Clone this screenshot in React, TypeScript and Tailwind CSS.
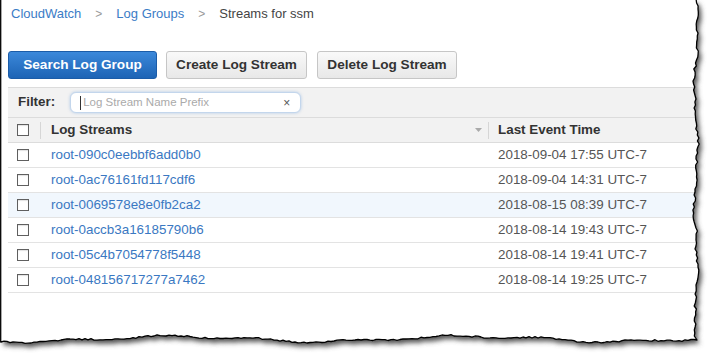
import React from "react";

const rows = [
  { name: "root-090c0eebbf6add0b0", time: "2018-09-04 17:55 UTC-7", hl: false },
  { name: "root-0ac76161fd117cdf6", time: "2018-09-04 14:31 UTC-7", hl: false },
  { name: "root-0069578e8e0fb2ca2", time: "2018-08-15 08:39 UTC-7", hl: true },
  { name: "root-0accb3a16185790b6", time: "2018-08-14 19:43 UTC-7", hl: false },
  { name: "root-05c4b7054778f5448", time: "2018-08-14 19:41 UTC-7", hl: false },
  { name: "root-048156717277a7462", time: "2018-08-14 19:25 UTC-7", hl: false },
];

function makeRand(seed: number) {
  let s = seed;
  return () => {
    s = (s * 1103515245 + 12345) % 2147483648;
    return s / 2147483648;
  };
}

function tornPaths() {
  const r = makeRand(42);
  const right: [number, number][] = [];
  for (let y = 0; y <= 338; y += 3) {
    const x = 696 + 1.6 * Math.sin(y / 19) + 0.8 * Math.sin(y / 7) + (r() - 0.5) * 2.4;
    right.push([x, y]);
  }
  const bottom: [number, number][] = [];
  for (let x = 697; x >= 0; x -= 3) {
    const y = 339 + 2.6 * Math.sin(x / 47 + 1) + 1.2 * Math.sin(x / 15) + (r() - 0.5) * 1.6;
    bottom.push([x, y]);
  }
  const pts = [...right, ...bottom, [0.7, 342] as [number, number], [0.7, 0] as [number, number]];
  const open = "M" + pts.map((p) => `${p[0].toFixed(1)},${p[1].toFixed(1)}`).join(" L");
  const closed = "M0,0 L" + pts.map((p) => `${p[0].toFixed(1)},${p[1].toFixed(1)}`).join(" L") + " Z";
  return { open, closed };
}

function TornFrame() {
  const { open, closed } = tornPaths();
  return (
    <svg className="absolute inset-0 pointer-events-none" width={710} height={353} viewBox="0 0 710 353">
      <defs>
        <filter id="blur" x="-10%" y="-10%" width="120%" height="120%">
          <feGaussianBlur stdDeviation="2.6" />
        </filter>
        <mask id="outside">
          <rect x="0" y="0" width="710" height="353" fill="white" />
          <path d={closed} fill="black" />
        </mask>
      </defs>
      <path d={`M0,0 H710 V353 H0 Z ${closed}`} fill="white" fillRule="evenodd" />
      <g mask="url(#outside)">
        <path d={closed} fill="#555" transform="translate(3,4)" filter="url(#blur)" />
      </g>
      <path d={open} fill="none" stroke="#000" strokeWidth="1.3" strokeLinejoin="round" />
    </svg>
  );
}

function Checkbox() {
  return <div className="w-[12px] h-[12px] border border-[#5f5f5f] bg-white shadow-[inset_0_1px_1px_rgba(0,0,0,0.12)]" />;
}

export default function App() {
  return (
    <div className="relative w-[710px] h-[353px] bg-white overflow-hidden font-['Liberation_Sans',Arial,sans-serif] text-[13px]">
      <div className="pl-[8px] flex flex-col">
        <div className="h-[28px] flex items-center pl-[3px] gap-[14px]">
          <span className="text-[#3b7cc6]">CloudWatch</span>
          <span className="text-[#999] text-[12px]">&gt;</span>
          <span className="text-[#3b7cc6]">Log Groups</span>
          <span className="text-[#999] text-[12px]">&gt;</span>
          <span className="text-[#444]">Streams for ssm</span>
        </div>
        <div className="mt-[23px] flex gap-[9px] h-[28px]">
          <button className="w-[149px] h-full rounded-[3px] border border-[#1b5ca8] bg-gradient-to-b from-[#3b88da] to-[#1d64b5] text-white font-bold text-[13.6px]">
            Search Log Group
          </button>
          <button className="w-[141px] h-full rounded-[3px] border border-[#c6c6c6] bg-gradient-to-b from-[#f9f9f9] to-[#e8e8e8] text-[#333] font-bold text-[13.6px]">
            Create Log Stream
          </button>
          <button className="ml-[1px] w-[140px] h-full rounded-[3px] border border-[#c6c6c6] bg-gradient-to-b from-[#f9f9f9] to-[#e8e8e8] text-[#333] font-bold text-[13.6px]">
            Delete Log Stream
          </button>
        </div>
        <div className="mt-[8px] h-[31px] bg-[#f2f2f2] border-t border-b border-[#dcdcdc] flex items-center">
          <span className="ml-[10px] font-bold text-[#333] text-[13.4px]">Filter:</span>
          <div className="ml-[15px] w-[231px] h-[21px] bg-white rounded-[6px] border border-[#c3d6ec] shadow-[0_0_3px_rgba(110,160,220,0.5)] flex items-center">
            <span className="ml-[9px] w-[1px] h-[14px] bg-[#333]" />
            <span className="ml-[2px] text-[11.5px] text-[#aaa] flex-1">Log Stream Name Prefix</span>
            <span className="mr-[10px] text-[12px] text-[#555]">×</span>
          </div>
        </div>
        <div className="h-[25px] bg-[#f2f2f2] border-b border-[#dcdcdc] flex items-center text-[13.4px]">
          <div className="w-[32px] h-full flex items-center pl-[9px]">
            <Checkbox />
          </div>
          <div className="w-[1px] h-[17px] bg-[#d6d6d6]" />
          <div className="w-[447px] h-full flex items-center pl-[10px] pr-[6px] justify-between">
            <span className="font-bold text-[#333]">Log Streams</span>
            <svg width="7" height="4" viewBox="0 0 7 4">
              <path d="M0,0 L7,0 L3.5,4 Z" fill="#aaa" />
            </svg>
          </div>
          <div className="w-[1px] h-[17px] bg-[#d6d6d6]" />
          <div className="pl-[9px] font-bold text-[#333]">Last Event Time</div>
        </div>
        {rows.map((r) => (
          <div
            key={r.name}
            className={`h-[25px] border-b border-[#e3e3e3] flex items-center text-[13.4px] ${r.hl ? "bg-[#f1f7fd]" : "bg-white"}`}
          >
            <div className="w-[32px] h-full flex items-center pl-[9px]">
              <Checkbox />
            </div>
            <div className="w-[449px] pl-[11px] text-[#3a78c2]">{r.name}</div>
            <div className="pl-[9px] text-[#555]">{r.time}</div>
          </div>
        ))}
      </div>
      <TornFrame />
    </div>
  );
}
